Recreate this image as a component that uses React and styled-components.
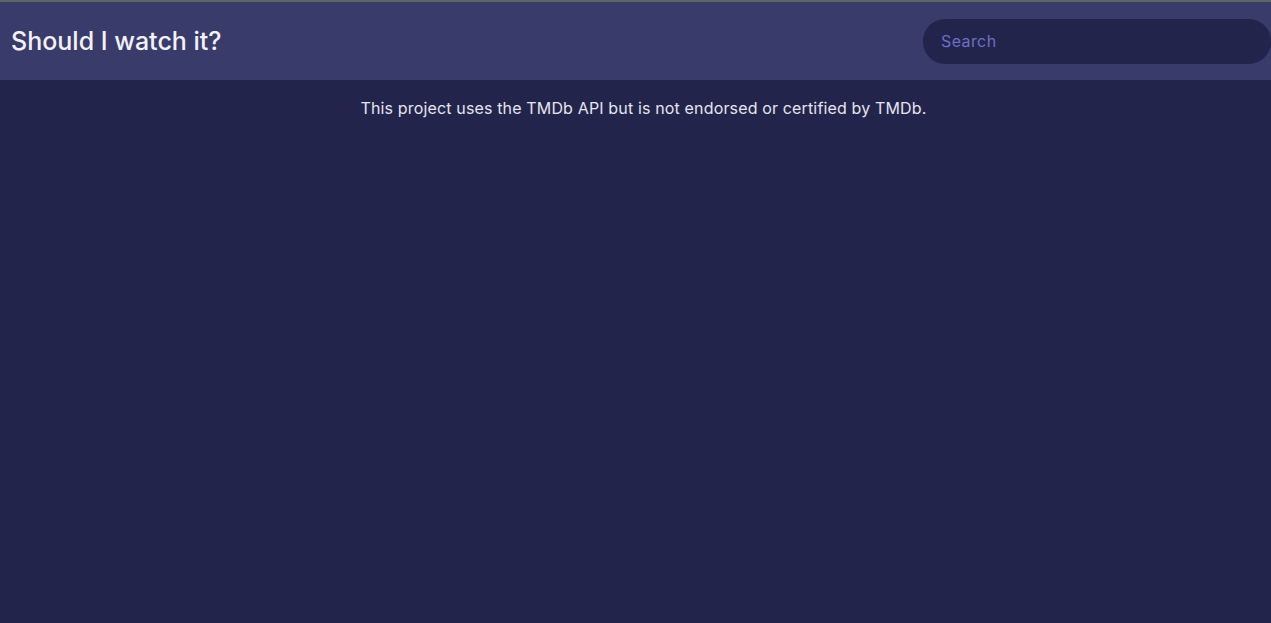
import React from 'react'
import styled, { createGlobalStyle } from 'styled-components'

const DARK = '#22244b'
const HEADER = '#393c6b'

const GlobalStyle = createGlobalStyle`
  html, body {
    margin: 0;
    padding: 0;
    background: ${DARK};
    font-family: 'Inter', 'Noto Sans', sans-serif;
  }
`

const Page = styled.div`
  min-height: 623px;
  border-top: 2px solid #5a6868;
  box-sizing: border-box;
  background: ${DARK};
`

const TopBar = styled.header`
  display: flex;
  align-items: center;
  justify-content: space-between;
  height: 78px;
  padding-left: 11px;
  background: ${HEADER};
`

const Title = styled.h1`
  margin: 0;
  font-size: 25px;
  font-weight: 500;
  letter-spacing: 0;
  color: #f3f1f7;
`

const SearchInput = styled.input`
  width: 348px;
  height: 45px;
  box-sizing: border-box;
  border: none;
  outline: none;
  border-radius: 22px;
  padding: 0 18px;
  background: ${DARK};
  color: #e8e8f4;
  font-family: inherit;
  font-size: 16px;
  letter-spacing: 0.4px;
  &::placeholder {
    color: #6a70c6;
  }
`

const Notice = styled.p`
  margin: 18px 0 0;
  padding-left: 16px;
  text-align: center;
  font-size: 16px;
  letter-spacing: 0.15px;
  color: #e6e4ee;
`

export default function App() {
  return (
    <>
      <GlobalStyle />
      <Page>
        <TopBar>
          <Title>Should I watch it?</Title>
          <SearchInput placeholder="Search" />
        </TopBar>
        <Notice>This project uses the TMDb API but is not endorsed or certified by TMDb.</Notice>
      </Page>
    </>
  )
}
